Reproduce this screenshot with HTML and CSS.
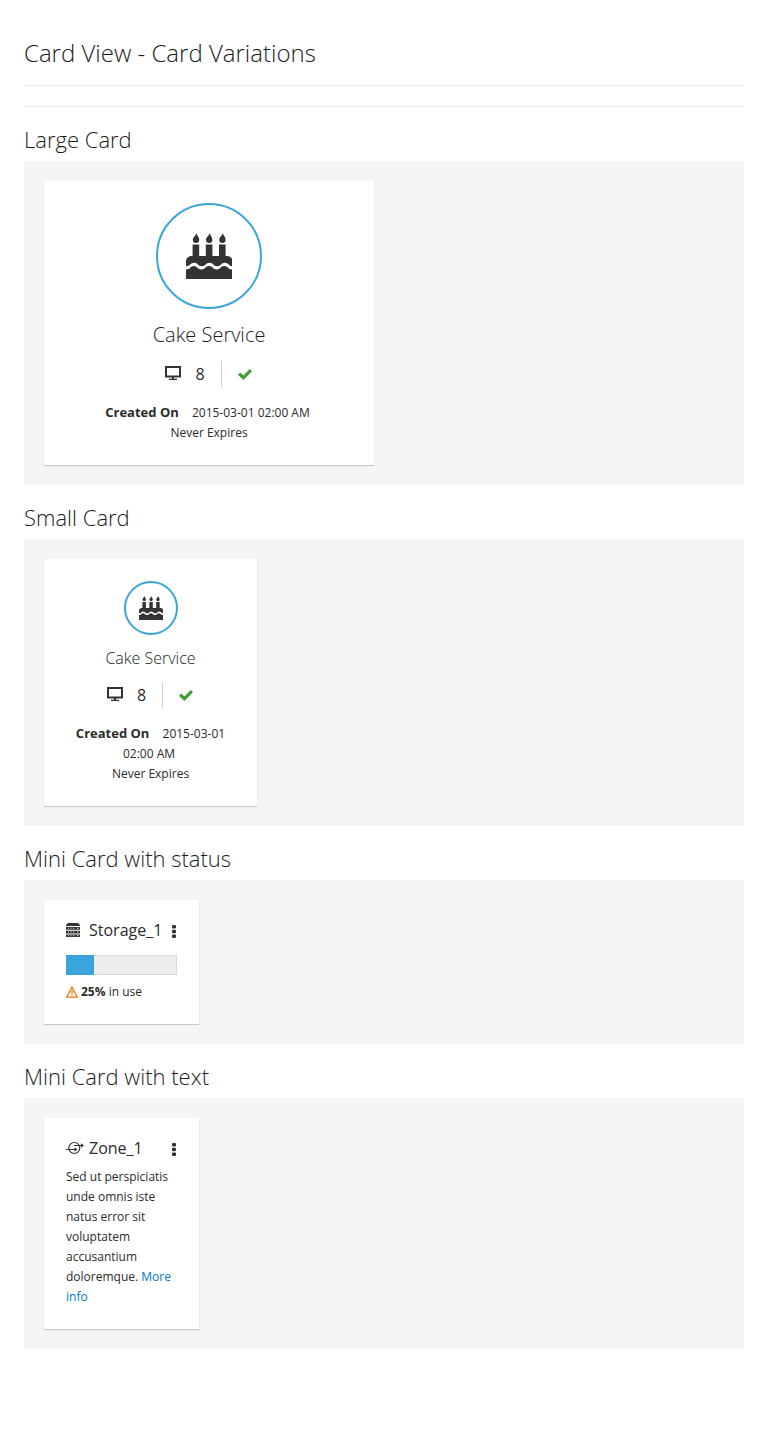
FILE: index.html
```html
<!DOCTYPE html>
<html lang="en">
<head>
<meta charset="utf-8">
<title>Card View - Card Variations</title>
<link rel="stylesheet" href="styles.css">
</head>
<body>
<svg class="sprite" aria-hidden="true">
  <symbol id="cake" viewBox="0 0 46 46">
    <path d="M10.500 0c.3 2.500 2.700 4 2.700 6.700a3.200 3.200 0 0 1-6.400 0C6.800 4 9.800 3 10.500 0zM23.700 0c.3 2.500 2.700 4 2.700 6.700a3.200 3.200 0 0 1-6.400 0C20 4 23 3 23.700 0zM36.900 0c.3 2.500 2.700 4 2.700 6.700a3.200 3.200 0 0 1-6.400 0c0-2.700 3-3.700 3.700-6.700z"/>
    <path d="M6.600 11.500h6.600v11.500h6.600V11.500h6.600v11.500h6.600V11.500h6.600v11.500h1.500c3 0 5.500 2.300 5.500 5.200v5.100c-4 0-4-3.500-7.700-3.500s-4 3.500-7.700 3.500-4-3.500-7.700-3.500-4 3.500-7.700 3.500-4-3.500-7.500-3.500S3.800 33.300 0 33.300v-5.100C0 25.300 2.500 23 5.500 23h1.100z"/>
    <path d="M0 36.400c4.500 0 4.300-3.500 7.700-3.500s4 3.500 7.700 3.500 4-3.500 7.600-3.500 4 3.500 7.700 3.500 4-3.500 7.600-3.500 4 3.500 7.700 3.500V46H0z"/>
  </symbol>
  <symbol id="screen" viewBox="0 0 16 14">
    <path fill-rule="evenodd" d="M0 0h16v11.500H0zM2 2v7.500h12V2zM7 11.500h2v1.200h3V14H4v-1.300h3z"/>
  </symbol>
  <symbol id="check" viewBox="0 0 14 11">
    <path d="M0 5.700 2.200 3.400 5.400 6.500 11.800 0 14 2.200 5.400 11z"/>
  </symbol>
  <symbol id="kebab" viewBox="0 0 4 13">
    <path d="M.8 0h2.400l.8.800v2l-.8.800H.8L0 2.800v-2zM.8 4.700h2.400l.8.800v2l-.8.800H.8L0 7.500v-2zM.8 9.400h2.400l.8.800v2l-.8.800H.8l-.8-.8v-2z"/>
  </symbol>
</svg>

<h1 class="page-title">Card View - Card Variations</h1>
<hr class="rule">

<h2 class="section-title">Large Card</h2>
<section class="stage">
  <article class="card card-large">
    <div class="badge"><svg class="cake"><use href="#cake"/></svg></div>
    <h3 class="card-name">Cake Service</h3>
    <div class="items">
      <span class="item"><svg class="screen"><use href="#screen"/></svg>8</span>
      <span class="item item-status"><svg class="check"><use href="#check"/></svg></span>
    </div>
    <p class="info"><strong>Created On</strong> <span class="date">2015-03-01 02:00 AM</span><br>Never Expires</p>
  </article>
</section>

<h2 class="section-title">Small Card</h2>
<section class="stage">
  <article class="card card-small">
    <div class="badge"><svg class="cake"><use href="#cake"/></svg></div>
    <h3 class="card-name">Cake Service</h3>
    <div class="items">
      <span class="item"><svg class="screen"><use href="#screen"/></svg>8</span>
      <span class="item item-status"><svg class="check"><use href="#check"/></svg></span>
    </div>
    <p class="info"><strong>Created On</strong> <span class="date">2015-03-01 02:00&nbsp;AM</span><br>Never Expires</p>
  </article>
</section>

<h2 class="section-title">Mini Card with status</h2>
<section class="stage">
  <article class="card card-mini">
    <header class="mini-head">
      <svg class="mini-icon" viewBox="0 0 18 16">
        <path d="M2 1h10l2 2v1H0V3zM0 5h14v2.700H0zM0 8.700h14v2.700H0zM0 12.400h14V15H0z"/>
        <path class="slots" d="M2 6.300h1M4.500 6.300h1M7 6.300h1M11 6.300h1.500M2 10h1M4.500 10h1M7 10h1M11 10h1.500M2 13.700h1M4.500 13.700h1M7 13.700h1M11 13.700h1.500"/>
      </svg>
      <h3 class="mini-name">Storage_1</h3>
      <svg class="kebab"><use href="#kebab"/></svg>
    </header>
    <div class="progress"><div class="progress-bar" style="width:25%"></div></div>
    <p class="usage">
      <svg class="warning" viewBox="0 0 12 12"><path d="M6 1 11.300 11.200H.7z"/><path d="M6 4.300v3.400M6 8.600v1.300"/></svg>
      <span><strong>25%</strong> in use</span>
    </p>
  </article>
</section>

<h2 class="section-title">Mini Card with text</h2>
<section class="stage">
  <article class="card card-mini card-text">
    <header class="mini-head">
      <svg class="mini-icon zone" viewBox="0 0 18 16">
        <circle cx="8.300" cy="8" r="5.500"/>
        <path d="M8 5.500h8M0 9.500h10"/>
        <path class="tips" d="M15 3.300 18 5.500l-3 2.200zM8.500 7.200l3 2.300-3 2.300z"/>
      </svg>
      <h3 class="mini-name">Zone_1</h3>
      <svg class="kebab"><use href="#kebab"/></svg>
    </header>
    <p class="copy">Sed ut perspiciatis unde omnis iste natus error sit voluptatem accusantium doloremque. <a class="link" href="#">More info</a></p>
  </article>
</section>
</body>
</html>
```
FILE: styles.css
```css
* { box-sizing: border-box; }

body {
  margin: 0;
  padding: 40px 24px 100px;
  background: #fff;
  color: #2b2b2b;
  font: 12px/20px "Open Sans", sans-serif;
}

h1, h2, h3, p { margin: 0; }
svg { display: block; fill: #333; }
.sprite { position: absolute; width: 0; height: 0; }

.page-title {
  padding-bottom: 19px;
  border-bottom: 1px solid #eee;
  font-size: 24px;
  line-height: 26px;
  font-weight: 300;
}

.rule { height: 1px; margin: 20px 0; border: 0; background: #eee; }

.section-title {
  margin: 20px 0 10px;
  font-size: 22px;
  line-height: 24px;
  font-weight: 300;
}

.page-title, .section-title, .card-name { color: #1c1c1c; }

.stage {
  padding: 20px;
  background: #f5f5f5;
}

.card {
  padding: 22px;
  background: #fff;
  box-shadow: 0 1px 1px rgba(3, 3, 3, .175);
}

.card-large { width: 330px; text-align: center; }
.card-small { width: 213px; text-align: center; }
.card-mini { width: 155px; height: 124px; }
.card-mini.card-text { height: 211px; }

.badge {
  display: flex;
  align-items: center;
  justify-content: center;
  width: 106px;
  height: 106px;
  margin: 0 auto;
  border: 2px solid #39a5dc;
  border-radius: 50%;
}
.cake { width: 46px; height: 46px; }
.card-small .badge { width: 54px; height: 54px; }
.card-small .cake { width: 24px; height: 24px; }

.card-name {
  margin-top: 14px;
  font-size: 20px;
  line-height: 24px;
  font-weight: 300;
}
.card-small .card-name { margin-top: 13px; font-size: 16px; line-height: 20px; }

.items {
  display: flex;
  justify-content: center;
  margin: 14px 0 16px;
  font-size: 16px;
}
.item {
  display: flex;
  align-items: center;
  gap: 14px;
  height: 26px;
  padding-right: 16px;
}
.item-status { padding: 0 1px 0 16px; border-left: 1px solid #d1d1d1; }
.screen { width: 16px; height: 14px; margin-bottom: 2px; }
.check { width: 14px; height: 11px; fill: #3f9c35; }
.info strong { margin-right: 10px; font-size: 13px; line-height: 1; }
.date { margin-right: 3px; }

.mini-head { display: flex; align-items: center; height: 16px; }
.mini-icon { width: 18px; height: 16px; margin-right: 5px; }
.slots { fill: none; stroke: #fff; stroke-width: .8; }
.zone circle, .zone path { fill: none; stroke: #333; stroke-width: 1.200; }
.zone .tips { fill: #333; stroke: none; }
.mini-name { font-size: 16px; line-height: 16px; font-weight: 400; }
.kebab { width: 4px; height: 13px; margin: 3px 1px 0 auto; }

.progress {
  height: 20px;
  margin-top: 17px;
  background: #ededed;
  box-shadow: inset 0 0 0 1px #d8d8d8;
}
.progress-bar { height: 100%; background: #39a5dc; }
.usage { display: flex; align-items: center; gap: 3px; margin-top: 7px; }
.warning { width: 12px; height: 12px; margin-bottom: 1px; fill: none; stroke: #ec7a08; stroke-width: 1.300; }
.copy { margin-top: 11px; }
.link { color: #0079c9; text-decoration: none; }
```
